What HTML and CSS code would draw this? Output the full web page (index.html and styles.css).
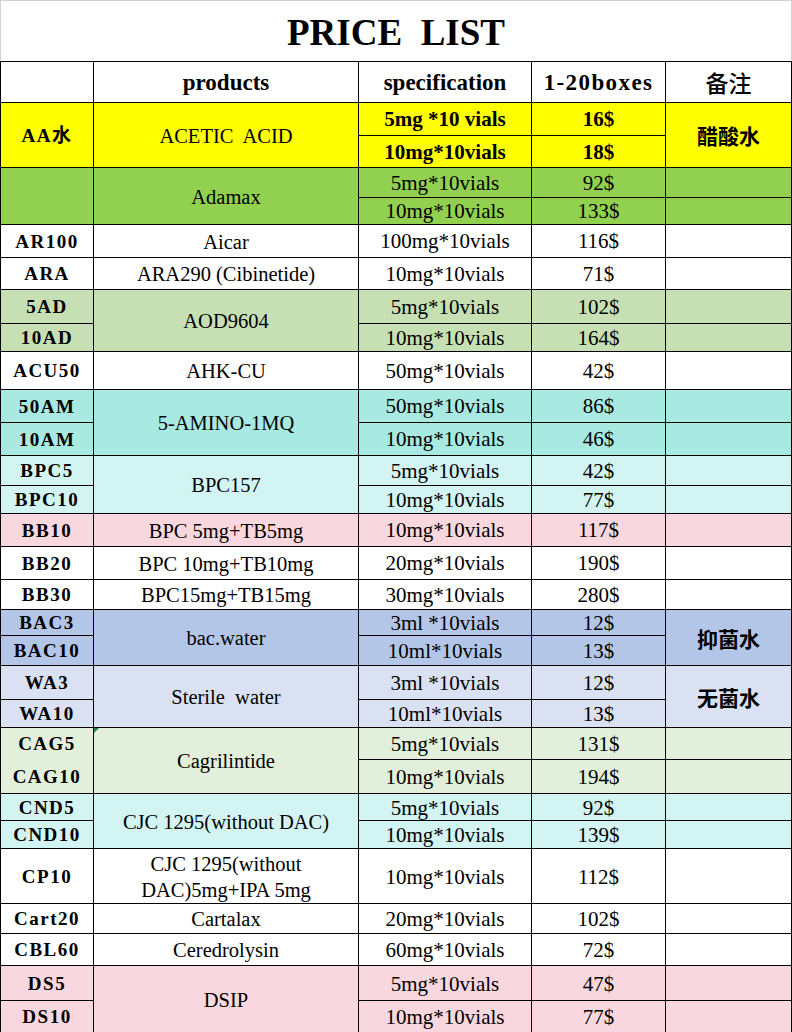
FILE: index.html
```html
<!DOCTYPE html>
<html>
<head>
<meta charset="utf-8">
<title>PRICE LIST</title>
<link rel="stylesheet" href="styles.css">
</head>
<body>
<div class="sheet">
  <div class="title">PRICE  LIST</div>
  <table class="grid">
    <colgroup>
      <col class="w-code"><col class="w-prod"><col class="w-spec"><col class="w-price"><col class="w-note">
    </colgroup>
    <tbody>
      <tr class="hd r41"><td></td><td>products</td><td>specification</td><td class="boxes">1-20boxes</td><td class="note">备注</td></tr>

      <tr class="c-yellow r33"><td class="code" rowspan="2">AA水</td><td class="prod pre" rowspan="2">ACETIC  ACID</td><td class="b">5mg *10 vials</td><td class="b">16$</td><td class="note" rowspan="2">醋酸水</td></tr>
      <tr class="c-yellow r32"><td class="b">10mg*10vials</td><td class="b">18$</td></tr>

      <tr class="c-green r30"><td class="code" rowspan="2"></td><td class="prod" rowspan="2">Adamax</td><td>5mg*10vials</td><td>92$</td><td></td></tr>
      <tr class="c-green r27"><td>10mg*10vials</td><td>133$</td><td></td></tr>

      <tr class="r33"><td class="code">AR100</td><td class="prod">Aicar</td><td>100mg*10vials</td><td>116$</td><td></td></tr>
      <tr class="r32"><td class="code">ARA</td><td class="prod">ARA290 (Cibinetide)</td><td>10mg*10vials</td><td>71$</td><td></td></tr>

      <tr class="c-sage r34"><td class="code">5AD</td><td class="prod" rowspan="2">AOD9604</td><td>5mg*10vials</td><td>102$</td><td></td></tr>
      <tr class="c-sage r28"><td class="code">10AD</td><td>10mg*10vials</td><td>164$</td><td></td></tr>

      <tr class="r38"><td class="code">ACU50</td><td class="prod">AHK-CU</td><td>50mg*10vials</td><td>42$</td><td></td></tr>

      <tr class="c-teal r33"><td class="code">50AM</td><td class="prod" rowspan="2">5-AMINO-1MQ</td><td>50mg*10vials</td><td>86$</td><td></td></tr>
      <tr class="c-teal r33"><td class="code">10AM</td><td>10mg*10vials</td><td>46$</td><td></td></tr>

      <tr class="c-aqua r30"><td class="code">BPC5</td><td class="prod" rowspan="2">BPC157</td><td>5mg*10vials</td><td>42$</td><td></td></tr>
      <tr class="c-aqua r28"><td class="code">BPC10</td><td>10mg*10vials</td><td>77$</td><td></td></tr>

      <tr class="c-pink r33"><td class="code">BB10</td><td class="prod">BPC 5mg+TB5mg</td><td>10mg*10vials</td><td>117$</td><td></td></tr>
      <tr class="r33"><td class="code">BB20</td><td class="prod">BPC 10mg+TB10mg</td><td>20mg*10vials</td><td>190$</td><td></td></tr>
      <tr class="r30"><td class="code">BB30</td><td class="prod">BPC15mg+TB15mg</td><td>30mg*10vials</td><td>280$</td><td></td></tr>

      <tr class="c-blue r26"><td class="code">BAC3</td><td class="prod" rowspan="2">bac.water</td><td>3ml *10vials</td><td>12$</td><td class="note" rowspan="2">抑菌水</td></tr>
      <tr class="c-blue r30"><td class="code">BAC10</td><td>10ml*10vials</td><td>13$</td></tr>

      <tr class="c-pale r34"><td class="code">WA3</td><td class="prod pre" rowspan="2">Sterile  water</td><td>3ml *10vials</td><td>12$</td><td class="note" rowspan="2">无菌水</td></tr>
      <tr class="c-pale r28"><td class="code">WA10</td><td>10ml*10vials</td><td>13$</td></tr>

      <tr class="c-mint r32"><td class="code open-bottom">CAG5</td><td class="prod flag" rowspan="2">Cagrilintide</td><td>5mg*10vials</td><td>131$</td><td></td></tr>
      <tr class="c-mint r34"><td class="code">CAG10</td><td>10mg*10vials</td><td>194$</td><td></td></tr>

      <tr class="c-aqua r27"><td class="code">CND5</td><td class="prod" rowspan="2">CJC 1295(without DAC)</td><td>5mg*10vials</td><td>92$</td><td></td></tr>
      <tr class="c-aqua r28"><td class="code">CND10</td><td>10mg*10vials</td><td>139$</td><td></td></tr>

      <tr class="r54"><td class="code">CP10</td><td class="prod wrap">CJC 1295(without<br>DAC)5mg+IPA 5mg</td><td>10mg*10vials</td><td>112$</td><td></td></tr>
      <tr class="r30"><td class="code">Cart20</td><td class="prod">Cartalax</td><td>20mg*10vials</td><td>102$</td><td></td></tr>
      <tr class="r32"><td class="code">CBL60</td><td class="prod">Ceredrolysin</td><td>60mg*10vials</td><td>72$</td><td></td></tr>

      <tr class="c-pink r35"><td class="code">DS5</td><td class="prod" rowspan="2">DSIP</td><td>5mg*10vials</td><td>47$</td><td></td></tr>
      <tr class="c-pink r32"><td class="code">DS10</td><td>10mg*10vials</td><td>77$</td><td></td></tr>
    </tbody>
  </table>
</div>
</body>
</html>
```
FILE: styles.css
```css
html, body {
  margin: 0;
  padding: 0;
  background: #ffffff;
}

.sheet {
  width: 792px;
}

.title {
  box-sizing: border-box;
  height: 61px;
  border: 1px solid #d2d2d2;
  border-bottom: 0;
  padding-top: 3px;
  text-align: center;
  font-family: "Liberation Serif", serif;
  font-weight: bold;
  font-size: 37px;
  line-height: 57px;
  white-space: pre;
  color: #000;
}

.grid {
  width: 792px;
  border-collapse: collapse;
  table-layout: fixed;
}

.w-code { width: 93px; }
.w-prod { width: 265px; }
.w-spec { width: 173px; }
.w-price { width: 134px; }
.w-note { width: 126px; }

.grid td {
  border: 1px solid #000;
  padding: 2px 0 0;
  text-align: center;
  vertical-align: middle;
  font-family: "Liberation Serif", serif;
  font-size: 21px;
  line-height: 1.1;
  color: #000;
  white-space: nowrap;
  overflow: hidden;
}

.grid td.code {
  font-family: "Liberation Serif", "Noto Sans CJK SC", serif;
  font-weight: bold;
  font-size: 19px;
  letter-spacing: 1.5px;
}

.grid td.prod {
  font-size: 20.5px;
}

.grid td.pre {
  white-space: pre;
}

.grid td.wrap {
  line-height: 26px;
}

.grid td.b {
  font-weight: bold;
}

.grid td.note {
  font-family: "Noto Sans CJK SC", sans-serif;
  font-weight: bold;
  font-size: 21px;
}

.hd td {
  font-weight: bold;
  font-size: 23px;
}

.grid .hd td.boxes {
  letter-spacing: 1.4px;
}

.grid .hd td.note {
  font-weight: 500;
  font-size: 23px;
}

.grid td.open-bottom {
  border-bottom-style: hidden;
}

.grid td.flag {
  position: relative;
}

.grid td.flag::before {
  content: "";
  position: absolute;
  left: 0;
  top: 0;
  border-top: 5px solid #1f8a3a;
  border-right: 5px solid transparent;
}

/* row heights */
.r26 { height: 26px; }
.r27 { height: 27px; }
.r28 { height: 28px; }
.r30 { height: 30px; }
.r32 { height: 32px; }
.r33 { height: 33px; }
.r34 { height: 34px; }
.r35 { height: 35px; }
.r38 { height: 38px; }
.r41 { height: 41px; }
.r54 { height: 54px; }

/* group fills */
.c-yellow td { background: #ffff00; }
.c-green td { background: #92d050; }
.c-sage td { background: #c6e0b4; }
.c-teal td { background: #a8eae2; }
.c-aqua td { background: #d2f4f2; }
.c-pink td { background: #f9d7de; }
.c-blue td { background: #b4c6e7; }
.c-pale td { background: #d9e1f2; }
.c-mint td { background: #e2efda; }
```
